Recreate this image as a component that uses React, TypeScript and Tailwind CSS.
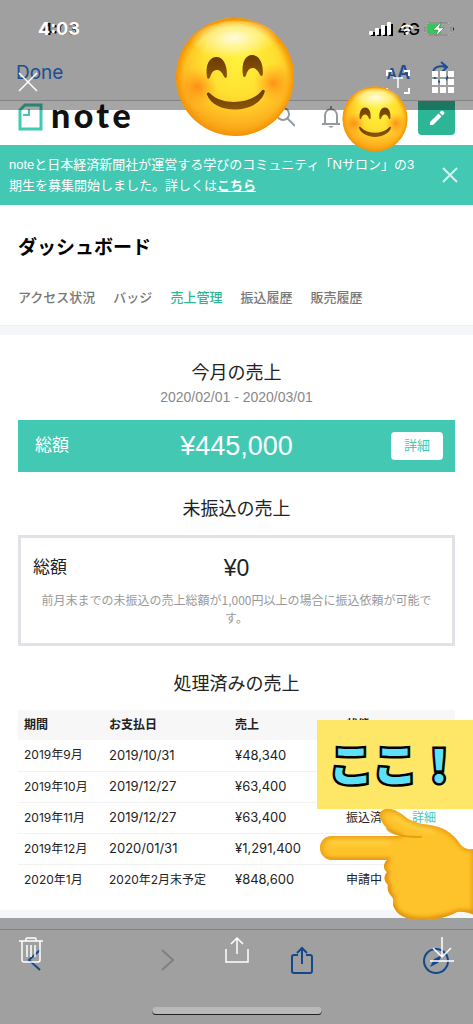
import { useId } from "react";

const tabs = [
  { label: "アクセス状況" },
  { label: "バッジ" },
  { label: "売上管理", active: true },
  { label: "振込履歴" },
  { label: "販売履歴" },
];

const payments = [
  { period: "2019年9月", paidOn: "2019/10/31", amount: "¥48,340" },
  { period: "2019年10月", paidOn: "2019/12/27", amount: "¥63,400" },
  { period: "2019年11月", paidOn: "2019/12/27", amount: "¥63,400", status: "振込済", detail: true },
  { period: "2019年12月", paidOn: "2020/01/31", amount: "¥1,291,400" },
  { period: "2020年1月", paidOn: "2020年2月末予定", planned: true, amount: "¥848,600", status: "申請中" },
];

function Smile({ className }: { className: string }) {
  const id = useId();
  return (
    <svg viewBox="0 0 120 120" className={className} role="img" aria-label="笑顔">
      <defs>
        <radialGradient id={id + "face"} cx="54%" cy="36%" r="66%">
          <stop offset="0" stopColor="#fff23c" />
          <stop offset="0.45" stopColor="#ffe030" />
          <stop offset="0.8" stopColor="#fdb420" />
          <stop offset="1" stopColor="#f59412" />
        </radialGradient>
        <radialGradient id={id + "rim"} cx="50%" cy="51%" r="51%">
          <stop offset="0.84" stopColor="#f9a000" stopOpacity="0" />
          <stop offset="1" stopColor="#f28a00" />
        </radialGradient>
        <radialGradient id={id + "cheek"}>
          <stop offset="0" stopColor="#ff7a10" stopOpacity="0.75" />
          <stop offset="1" stopColor="#ff9a1a" stopOpacity="0" />
        </radialGradient>
        <radialGradient id={id + "shine"} cx="50%" cy="40%" r="50%">
          <stop offset="0" stopColor="#fff" stopOpacity="0.85" />
          <stop offset="0.6" stopColor="#fffcc0" stopOpacity="0.5" />
          <stop offset="1" stopColor="#fff9a0" stopOpacity="0" />
        </radialGradient>
        <linearGradient id={id + "brown"} x1="0" y1="0" x2="0" y2="1">
          <stop offset="0" stopColor="#6b3b02" />
          <stop offset="1" stopColor="#8c560b" />
        </linearGradient>
      </defs>
      <circle cx="60" cy="60" r="59" fill={`url(#${id}face)`} />
      <circle cx="60" cy="60" r="59" fill={`url(#${id}rim)`} />
      <ellipse cx="61" cy="25" rx="44" ry="21" fill={`url(#${id}shine)`} />
      <circle cx="22" cy="68" r="20" fill={`url(#${id}cheek)`} />
      <circle cx="98" cy="68" r="20" fill={`url(#${id}cheek)`} />
      <g fill={`url(#${id}brown)`}>
        <path d="M32 58C31 47 35 39 42 39S53 47 52 58C52 61 50 61 49 59C47 54 45 52 42 52S37 54 35 59C34 61 32 61 32 58Z" />
        <path d="M68 58C67 47 71 39 78 39S89 47 88 58C88 61 86 61 85 59C83 54 81 52 78 52S73 54 71 59C70 61 68 61 68 58Z" />
        <path d="M31 76C31 74 33 73 35 76C47 88 73 88 85 76C87 73 89 74 89 76C82 98 38 98 31 76Z" />
      </g>
    </svg>
  );
}

function PointingHand() {
  const id = useId();
  const outline =
    "M331 836H402C393 834 386 829 382 822C379 816 379 812 383 810C389 807 396 810 403 815C411 822 420 824 430 825C443 827 452 833 458 841C462 848 467 850 474 849V915C469 912 462 911 457 912C448 917 436 920 422 920C406 920 396 915 393 905C393 901 394 899 392 897C388 893 387 889 388 885C383 880 384 876 387 872C382 868 384 863 387 860H333C316 860 316 837 331 836Z";
  return (
    <svg viewBox="318 806 155 116" className="absolute top-[806px] right-0 w-[155px]" role="img" aria-label="左を指す手">
      <defs>
        <clipPath id={id + "clip"}>
          <path d={outline} />
        </clipPath>
        <filter id={id + "soft"} x="-20%" y="-20%" width="140%" height="140%">
          <feGaussianBlur stdDeviation="2" />
        </filter>
      </defs>
      <path d={outline} fill="#fec22b" />
      <g clipPath={`url(#${id}clip)`}>
        <g fill="none" filter={`url(#${id}soft)`}>
          <path d={outline} stroke="#e8970f" strokeWidth="4" />
          <path d="M324 861H388M386 872C380 866 383 862 389 860M389 885C384 880 385 876 388 872M394 898C388 893 387 889 390 885" stroke="#d98708" strokeWidth="4" />
          <path d="M392 903C395 918 412 922 430 920C444 918 452 914 474 913" stroke="#dc8b0c" strokeWidth="6" />
          <path d="M330 843H390M392 815C402 824 420 829 434 832" stroke="#ffd03c" strokeWidth="5" />
        </g>
      </g>
      <path d="M387 829C393 835 404 837 421 837" fill="none" stroke="#dc9210" strokeWidth="2" strokeLinecap="round" opacity="0.7" />
    </svg>
  );
}

function SafariHeader() {
  return (
    <header className="border-b border-[#cacaca] bg-[#f6f6f6] pb-3">
      <div className="flex h-[58px] items-center justify-between pr-[18px] pl-[42px] font-[Inter,sans-serif]">
        <span className="text-base font-semibold text-black">4:03</span>
        <div className="flex items-center gap-1 text-black">
          <svg viewBox="0 0 24 16" className="h-4 w-6" fill="currentColor">
            <path d="M1 11h4v4H1zM7 8h4v7H7zM13 5h4v10h-4zM19 3h4v12h-4z" />
          </svg>
          <span className="text-base font-medium">4G</span>
          <svg viewBox="0 0 31 16" className="h-4 w-[31px]">
            <rect x="1" y="2" width="26" height="12" rx="4" fill="none" stroke="#555" />
            <path d="M29 6v4q2-2 0-4" fill="#222" />
          </svg>
        </div>
      </div>
      <div className="flex h-[30px] items-center justify-between pr-5 pl-4 text-[#2b78df]">
        <button className="font-[Inter,sans-serif] text-[19px]">Done</button>
        <div className="flex items-center gap-[19px]">
          <button className="flex items-baseline font-[Inter,sans-serif] leading-5" aria-label="文字サイズ">
            <span className="text-sm font-semibold">A</span>
            <span className="text-lg font-semibold">A</span>
          </button>
          <button aria-label="再読み込み">
            <svg viewBox="0 0 24 30" className="h-[30px] w-6" fill="none" stroke="currentColor" strokeWidth="2">
              <path d="M4 14C5 9 10 7 17 9M12 4l6 5-5 5M5 18c3 8 11 8 14 0" />
            </svg>
          </button>
        </div>
      </div>
    </header>
  );
}

function ViewerTopBar() {
  return (
    <div className="absolute inset-x-0 top-0 h-[110px] bg-black/35 text-white">
      <div className="flex h-[58px] items-center justify-between pr-[18px] pl-[38px] font-[Inter,sans-serif]">
        <span className="text-lg font-bold">4:03</span>
        <div className="flex items-center">
          <svg viewBox="0 0 24 16" className="mr-2 h-4 w-6" fill="currentColor">
            <rect x="1" y="10" width="4" height="4" rx="1" />
            <rect x="7" y="7" width="4" height="7" rx="1" />
            <rect x="13" y="4" width="4" height="10" rx="1" />
            <rect x="19" y="1" width="4" height="13" rx="1" />
          </svg>
          <svg viewBox="0 0 14 12" className="mr-2.5 h-3 w-3.5" fill="none" stroke="currentColor" strokeWidth="2">
            <path d="M1 5q6-5 12 0M4 8q3-3 6 0" />
            <path d="M5 10q2-2 4 0l-2 2z" fill="currentColor" stroke="none" />
          </svg>
          <svg viewBox="0 0 31 16" className="h-4 w-[31px]">
            <rect x="1" y="2" width="26" height="12" rx="4" fill="none" stroke="#bbb" />
            <path d="M5 3h12v10H5q-2 0-2-2V5q0-2 2-2" fill="#35c759" />
            <path d="M17 1l-8 8h5l-2 6 8-8h-5z" fill="#fff" stroke="#555" strokeWidth="0.500" />
          </svg>
        </div>
      </div>
      <div className="flex h-12 items-center justify-between px-[18px]">
        <button aria-label="閉じる">
          <svg viewBox="0 0 20 20" className="size-5" stroke="currentColor" strokeWidth="1.500">
            <path d="M1 1l18 18M19 1L1 19" />
          </svg>
        </button>
        <div className="flex items-center gap-[21px]">
          <button aria-label="テキスト認識">
            <svg viewBox="0 0 24 24" className="size-6" fill="none" stroke="currentColor" strokeWidth="2">
              <path d="M1 6V1h5M18 1h5v5M23 18v5h-5M6 23H1v-5" />
              <path d="M7 8h10M12 8v10" strokeWidth="1.500" />
            </svg>
          </button>
          <button aria-label="一覧">
            <svg viewBox="0 0 24 24" className="size-6" fill="currentColor">
              <path d="M1 1h6v6H1zM9 1h6v6H9zM17 1h6v6h-6zM1 9h6v6H1zM9 9h6v6H9zM17 9h6v6h-6zM1 17h6v6H1zM9 17h6v6H9zM17 17h6v6h-6z" />
            </svg>
          </button>
        </div>
      </div>
    </div>
  );
}

function SiteNav() {
  return (
    <nav className="flex h-11 items-start justify-between px-[18px]">
      <a href="#" className="flex items-start gap-2 text-[#111]">
        <svg viewBox="0 0 25 28" className="mt-0.5 h-7 w-[25px]" fill="none" stroke="#41c9b4" strokeWidth="3">
          <path d="M7 2H23V26H2V7Z" />
          <path d="M11 6v6H5" strokeWidth="2" />
        </svg>
        <span className="font-[Lato,sans-serif] text-[34px] leading-7 font-black tracking-widest">note</span>
      </a>
      <div className="flex items-start">
        <button className="mt-1.5 mr-[26px]" aria-label="検索">
          <svg viewBox="0 0 20 20" className="size-5" fill="none" stroke="#949a9f" strokeWidth="2">
            <circle cx="8" cy="7" r="6" />
            <path d="M12 11l8 8" />
          </svg>
        </button>
        <button className="mt-1 mr-[77px]" aria-label="通知">
          <svg viewBox="0 0 20 24" className="h-6 w-5" fill="none" stroke="#949a9f" strokeWidth="2">
            <path d="M10 1v3M1 19h18M4 19V11C4 2 16 2 16 11v8" />
            <path d="M7 21h6l-3 2z" fill="#949a9f" stroke="none" />
          </svg>
        </button>
        <button className="flex h-[34px] w-[37px] items-center justify-center rounded-b bg-[#2cb696]" aria-label="投稿">
          <svg viewBox="0 0 16 16" className="size-4" fill="#fff">
            <path d="M1 12l8.500-8.500 3 3L4 15H1zM10.500 2.500L12 1q1-1 2 0l1 1q1 1 0 2l-1.500 1.500z" />
          </svg>
        </button>
      </div>
    </nav>
  );
}

function SafariToolbar() {
  return (
    <footer className="relative flex h-[95px] items-start justify-between border-t border-[#cacaca] bg-[#f6f6f6] px-6 pt-[18px] text-[#1f6fd6]">
      <button aria-label="戻る">
        <svg viewBox="0 0 24 24" className="size-6" fill="none" stroke="currentColor" strokeWidth="2">
          <path d="M16 2L5 12l11 10" />
        </svg>
      </button>
      <button aria-label="進む">
        <svg viewBox="0 0 24 24" className="size-6" fill="none" stroke="#c4c4c4" strokeWidth="2">
          <path d="M5 2l11 10L5 22" />
        </svg>
      </button>
      <button aria-label="共有">
        <svg viewBox="0 0 24 28" className="-mt-0.5 h-7 w-6" fill="none" stroke="currentColor" strokeWidth="2">
          <path d="M8 9H4Q2 9 2 11V25Q2 27 4 27H20Q22 27 22 25V11Q22 9 20 9H16M12 18V2M7 7l5-5 5 5" />
        </svg>
      </button>
      <button aria-label="Safariで開く">
        <svg viewBox="0 0 26 26" className="size-[26px]" fill="none" stroke="currentColor" strokeWidth="2">
          <circle cx="13" cy="13" r="12" />
          <path d="M19 7l-8 4-4 8 8-4z" fill="currentColor" stroke="none" />
        </svg>
      </button>
      <div className="absolute bottom-[9px] left-1/2 h-[6px] w-[169px] -translate-x-1/2 rounded-full bg-[#333]" />
    </footer>
  );
}

function ViewerBottomBar() {
  return (
    <div className="absolute inset-x-0 bottom-0 flex h-[106px] items-start justify-between bg-black/35 px-[19px] pt-[18px] text-white">
      <button aria-label="削除">
        <svg viewBox="0 0 24 28" className="h-7 w-6" fill="none" stroke="currentColor" strokeWidth="1.500">
          <path d="M0 5h24M7 5V3q0-1 1-1h8q1 0 1 1v2M3 5v19q0 2 2 2h14q2 0 2-2V5M8 9v12M12 9v12M16 9v12" />
        </svg>
      </button>
      <button aria-label="書き出し">
        <svg viewBox="0 0 24 28" className="h-7 w-6" fill="none" stroke="currentColor" strokeWidth="1.500">
          <path d="M1 13v13h22V13M12 18V2M6 8l6-6 6 6" />
        </svg>
      </button>
      <button aria-label="保存">
        <svg viewBox="0 0 24 28" className="h-7 w-6" fill="none" stroke="currentColor" strokeWidth="1.500">
          <path d="M12 1v20M3 12l9 9 9-9M0 25h24" />
        </svg>
      </button>
      <div className="absolute bottom-[10px] left-1/2 h-[7px] w-[169px] -translate-x-1/2 rounded-full bg-[#b9b9b9]" />
    </div>
  );
}

export default function App() {
  return (
    <div className="relative overflow-hidden bg-white font-['Liberation_Sans','Noto_Sans_CJK_JP',sans-serif] text-[#222]">
      <SafariHeader />
      <SiteNav />

      <div className="flex items-center justify-between bg-[#43c9b3] py-[9px] pr-[14px] pl-[9px] text-white">
        <p className="text-[13px] leading-[21px] whitespace-nowrap">
          noteと日本経済新聞社が運営する学びのコミュニティ「Nサロン」の3
          <br />
          期生を募集開始しました。詳しくは
          <a href="#" className="font-bold underline">
            こちら
          </a>
        </p>
        <button aria-label="お知らせを閉じる">
          <svg viewBox="0 0 18 18" className="size-[18px]" stroke="#d5f3ee" strokeWidth="2">
            <path d="M2 2l14 14M16 2L2 16" />
          </svg>
        </button>
      </div>

      <div className="px-[18px] pt-7 pb-[17px]">
        <h1 className="text-[19px] leading-[30px] font-bold text-black">ダッシュボード</h1>
        <nav className="mt-[25px] flex gap-[18px] text-[13px] leading-5 font-medium">
          {tabs.map((tab) => (
            <a key={tab.label} href="#" className={tab.active ? "text-[#2cb696]" : "text-[#777]"}>
              {tab.label}
            </a>
          ))}
        </nav>
      </div>
      <div className="h-2.5 border-t border-[#eff0f2] bg-[#f5f6f9]" />

      <main className="px-[18px] pt-6 pb-[15px]">
        {/* 今月の売上 */}
        <h2 className="text-center text-lg leading-7">今月の売上</h2>
        <p className="text-center text-sm leading-[21px] text-[#888]">2020/02/01 - 2020/03/01</p>
        <div className="mt-3 grid grid-cols-[1fr_auto_1fr] items-center bg-[#43c9b3] p-3 text-white">
          <span className="pl-[5px] text-[17px] leading-7">総額</span>
          <span className="text-[27px] leading-7">¥445,000</span>
          <button className="h-7 justify-self-end rounded bg-white px-[13px] text-[13px] text-[#43c9b3]">詳細</button>
        </div>

        {/* 未振込の売上 */}
        <h2 className="mt-[23px] text-center text-lg leading-7">未振込の売上</h2>
        <div className="mt-3 border-[3px] border-[#e0e2e8] px-3 py-4">
          <div className="grid grid-cols-[1fr_auto_1fr] items-center leading-7">
            <span className="text-[17px]">総額</span>
            <span className="text-[23px]">¥0</span>
          </div>
          <p className="mt-[9px] px-1 text-center font-['Noto_Sans_CJK_JP',sans-serif] text-xs leading-[18px] text-[#999]">
            前月末までの未振込の売上総額が1,000円以上の場合に振込依頼が可能です。
          </p>
        </div>

        {/* 処理済みの売上 */}
        <h2 className="mt-6 text-center text-lg leading-7">処理済みの売上</h2>
        <table className="mt-3 w-full table-fixed text-left font-[Inter,'Noto_Sans_CJK_JP',sans-serif] text-xs whitespace-nowrap">
          <thead>
            <tr className="h-[30px] bg-[#f7f7f8]">
              <th className="w-[85px] pl-1.5">期間</th>
              <th className="w-[126px] pl-1.5">お支払日</th>
              <th className="w-[111px] pl-1.5">売上</th>
              <th className="w-[66px] pl-1.5">状態</th>
              <th />
            </tr>
          </thead>
          <tbody>
            {payments.map((row) => (
              <tr key={row.period} className="h-[31px] border-b border-[#f2f2f2] last:border-0">
                <td className="pl-1.5">{row.period}</td>
                <td className={row.planned ? "pl-1.5" : "pl-1.5 text-[13px]"}>{row.paidOn}</td>
                <td className="pl-1.5 text-[13px]">{row.amount}</td>
                <td className="pl-1.5">{row.status}</td>
                <td className="pl-1.5">
                  {row.detail && (
                    <a href="#" className="text-[#43c9b3]">
                      詳細
                    </a>
                  )}
                </td>
              </tr>
            ))}
          </tbody>
        </table>
      </main>
      <div className="h-[19px] bg-[#f5f6f9]" />
      <SafariToolbar />

      <ViewerTopBar />
      <ViewerBottomBar />

      {/* スタンプ */}
      <Smile className="absolute top-[17px] left-[175px] size-[120px] -rotate-3" />
      <Smile className="absolute top-[86px] left-[342px] size-[66px]" />
      <PointingHand />
      <div className="absolute top-[720px] right-0 flex h-[89px] w-[156px] items-center justify-center bg-[#fee766] pb-1">
        <span className="font-['Noto_Sans_CJK_JP',sans-serif] text-[44px] leading-none font-black text-[#5ce1f8] [-webkit-text-stroke:5px_black] [paint-order:stroke_fill]">
          ここ！
        </span>
      </div>
    </div>
  );
}
